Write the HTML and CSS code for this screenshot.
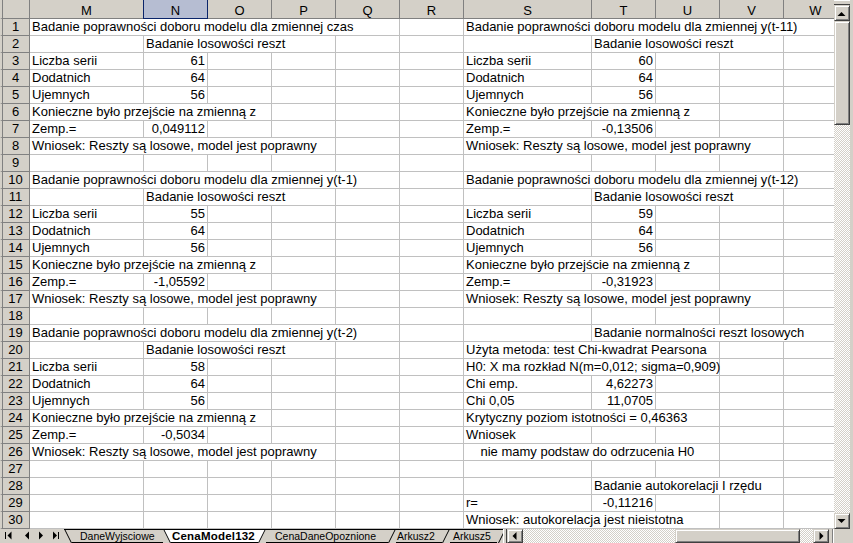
FILE: index.html
```html
<!DOCTYPE html>
<html lang="pl">
<head>
<meta charset="utf-8">
<title>CenaModel132</title>
<link rel="stylesheet" href="styles.css">
</head>
<body>
<div class="window">
  <div class="main">
    <div class="sheet">
      <div class="corner-cell"></div><div class="ch">M</div><div class="ch sel">N</div><div class="ch">O</div><div class="ch">P</div><div class="ch">Q</div><div class="ch">R</div><div class="ch">S</div><div class="ch">T</div><div class="ch">U</div><div class="ch">V</div><div class="ch">W</div>

      <div class="rh">1</div><div class="c sp5">Badanie poprawności doboru modelu dla zmiennej czas</div><div class="c"></div><div class="c sp5">Badanie poprawności doboru modelu dla zmiennej y(t-11)</div>

      <div class="rh">2</div><div class="c"></div><div class="c sp3">Badanie losowości reszt</div><div class="c"></div><div class="c"></div><div class="c"></div><div class="c sp3">Badanie losowości reszt</div><div class="c"></div>

      <div class="rh">3</div><div class="c">Liczba serii</div><div class="c n">61</div><div class="c"></div><div class="c"></div><div class="c"></div><div class="c"></div><div class="c">Liczba serii</div><div class="c n">60</div><div class="c"></div><div class="c"></div><div class="c"></div>

      <div class="rh">4</div><div class="c">Dodatnich</div><div class="c n">64</div><div class="c"></div><div class="c"></div><div class="c"></div><div class="c"></div><div class="c">Dodatnich</div><div class="c n">64</div><div class="c"></div><div class="c"></div><div class="c"></div>

      <div class="rh">5</div><div class="c">Ujemnych</div><div class="c n">56</div><div class="c"></div><div class="c"></div><div class="c"></div><div class="c"></div><div class="c">Ujemnych</div><div class="c n">56</div><div class="c"></div><div class="c"></div><div class="c"></div>

      <div class="rh">6</div><div class="c sp3">Konieczne było przejście na zmienną z</div><div class="c"></div><div class="c"></div><div class="c"></div><div class="c sp3">Konieczne było przejście na zmienną z</div><div class="c"></div><div class="c"></div>

      <div class="rh">7</div><div class="c">Zemp.=</div><div class="c n">0,049112</div><div class="c"></div><div class="c"></div><div class="c"></div><div class="c"></div><div class="c">Zemp.=</div><div class="c n">-0,13506</div><div class="c"></div><div class="c"></div><div class="c"></div>

      <div class="rh">8</div><div class="c sp4">Wniosek: Reszty są losowe, model jest poprawny</div><div class="c"></div><div class="c"></div><div class="c sp4">Wniosek: Reszty są losowe, model jest poprawny</div><div class="c"></div>

      <div class="rh">9</div><div class="c"></div><div class="c"></div><div class="c"></div><div class="c"></div><div class="c"></div><div class="c"></div><div class="c"></div><div class="c"></div><div class="c"></div><div class="c"></div><div class="c"></div>

      <div class="rh">10</div><div class="c sp5">Badanie poprawności doboru modelu dla zmiennej y(t-1)</div><div class="c"></div><div class="c sp5">Badanie poprawności doboru modelu dla zmiennej y(t-12)</div>

      <div class="rh">11</div><div class="c"></div><div class="c sp3">Badanie losowości reszt</div><div class="c"></div><div class="c"></div><div class="c"></div><div class="c sp3">Badanie losowości reszt</div><div class="c"></div>

      <div class="rh">12</div><div class="c">Liczba serii</div><div class="c n">55</div><div class="c"></div><div class="c"></div><div class="c"></div><div class="c"></div><div class="c">Liczba serii</div><div class="c n">59</div><div class="c"></div><div class="c"></div><div class="c"></div>

      <div class="rh">13</div><div class="c">Dodatnich</div><div class="c n">64</div><div class="c"></div><div class="c"></div><div class="c"></div><div class="c"></div><div class="c">Dodatnich</div><div class="c n">64</div><div class="c"></div><div class="c"></div><div class="c"></div>

      <div class="rh">14</div><div class="c">Ujemnych</div><div class="c n">56</div><div class="c"></div><div class="c"></div><div class="c"></div><div class="c"></div><div class="c">Ujemnych</div><div class="c n">56</div><div class="c"></div><div class="c"></div><div class="c"></div>

      <div class="rh">15</div><div class="c sp3">Konieczne było przejście na zmienną z</div><div class="c"></div><div class="c"></div><div class="c"></div><div class="c sp3">Konieczne było przejście na zmienną z</div><div class="c"></div><div class="c"></div>

      <div class="rh">16</div><div class="c">Zemp.=</div><div class="c n">-1,05592</div><div class="c"></div><div class="c"></div><div class="c"></div><div class="c"></div><div class="c">Zemp.=</div><div class="c n">-0,31923</div><div class="c"></div><div class="c"></div><div class="c"></div>

      <div class="rh">17</div><div class="c sp4">Wniosek: Reszty są losowe, model jest poprawny</div><div class="c"></div><div class="c"></div><div class="c sp4">Wniosek: Reszty są losowe, model jest poprawny</div><div class="c"></div>

      <div class="rh">18</div><div class="c"></div><div class="c"></div><div class="c"></div><div class="c"></div><div class="c"></div><div class="c"></div><div class="c"></div><div class="c"></div><div class="c"></div><div class="c"></div><div class="c"></div>

      <div class="rh">19</div><div class="c sp5">Badanie poprawności doboru modelu dla zmiennej y(t-2)</div><div class="c"></div><div class="c"></div><div class="c sp4">Badanie normalności reszt losowych</div>

      <div class="rh">20</div><div class="c"></div><div class="c sp3">Badanie losowości reszt</div><div class="c"></div><div class="c"></div><div class="c sp3">Użyta metoda: test Chi-kwadrat Pearsona</div><div class="c"></div><div class="c"></div>

      <div class="rh">21</div><div class="c">Liczba serii</div><div class="c n">58</div><div class="c"></div><div class="c"></div><div class="c"></div><div class="c"></div><div class="c sp3">H0: X ma rozkład N(m=0,012; sigma=0,909)</div><div class="c"></div><div class="c"></div>

      <div class="rh">22</div><div class="c">Dodatnich</div><div class="c n">64</div><div class="c"></div><div class="c"></div><div class="c"></div><div class="c"></div><div class="c">Chi emp.</div><div class="c n">4,62273</div><div class="c"></div><div class="c"></div><div class="c"></div>

      <div class="rh">23</div><div class="c">Ujemnych</div><div class="c n">56</div><div class="c"></div><div class="c"></div><div class="c"></div><div class="c"></div><div class="c">Chi 0,05</div><div class="c n">11,0705</div><div class="c"></div><div class="c"></div><div class="c"></div>

      <div class="rh">24</div><div class="c sp3">Konieczne było przejście na zmienną z</div><div class="c"></div><div class="c"></div><div class="c"></div><div class="c sp3">Krytyczny poziom istotności = 0,46363</div><div class="c"></div><div class="c"></div>

      <div class="rh">25</div><div class="c">Zemp.=</div><div class="c n">-0,5034</div><div class="c"></div><div class="c"></div><div class="c"></div><div class="c"></div><div class="c">Wniosek</div><div class="c"></div><div class="c"></div><div class="c"></div><div class="c"></div>

      <div class="rh">26</div><div class="c sp4">Wniosek: Reszty są losowe, model jest poprawny</div><div class="c"></div><div class="c"></div><div class="c sp3 pre">    nie mamy podstaw do odrzucenia H0</div><div class="c"></div><div class="c"></div>

      <div class="rh">27</div><div class="c"></div><div class="c"></div><div class="c"></div><div class="c"></div><div class="c"></div><div class="c"></div><div class="c"></div><div class="c"></div><div class="c"></div><div class="c"></div><div class="c"></div>

      <div class="rh">28</div><div class="c"></div><div class="c"></div><div class="c"></div><div class="c"></div><div class="c"></div><div class="c"></div><div class="c"></div><div class="c sp3">Badanie autokorelacji I rzędu</div><div class="c"></div>

      <div class="rh">29</div><div class="c"></div><div class="c"></div><div class="c"></div><div class="c"></div><div class="c"></div><div class="c"></div><div class="c">r=</div><div class="c n">-0,11216</div><div class="c"></div><div class="c"></div><div class="c"></div>

      <div class="rh">30</div><div class="c"></div><div class="c"></div><div class="c"></div><div class="c"></div><div class="c"></div><div class="c"></div><div class="c sp3">Wniosek: autokorelacja jest nieistotna</div><div class="c"></div><div class="c"></div>
    </div>

    <div class="vscroll">
      <div class="vsplit"></div>
      <div class="btn">
        <svg width="16" height="16" viewBox="0 0 16 16"><polygon points="3.5,11 11.5,11 7.5,7" fill="#000"/></svg>
      </div>
      <div class="vthumb"></div>
      <div class="vtrack"></div>
      <div class="btn">
        <svg width="16" height="16" viewBox="0 0 16 16"><polygon points="3.5,6 11.5,6 7.5,10" fill="#000"/></svg>
      </div>
    </div>
  </div>

  <div class="bottom">
    <div class="nav">
      <svg width="64" height="14" viewBox="0 0 64 14">
        <rect x="5" y="3" width="1" height="7" fill="#000"/>
        <polygon points="11.5,2.5 7.5,6.5 11.5,10.5" fill="#000"/>
        <polygon points="29,2.5 25,6.5 29,10.5" fill="#000"/>
        <polygon points="39,2.5 43,6.5 39,10.5" fill="#000"/>
        <polygon points="53,2.5 57,6.5 53,10.5" fill="#000"/>
        <rect x="58" y="3" width="1" height="7" fill="#000"/>
      </svg>
    </div>
    <div class="tabs">
      <svg class="slant" width="8" height="14" viewBox="0 0 8 14"><line x1="0.5" y1="0" x2="7.5" y2="14" stroke="#000"/></svg>
      <span class="tab t1">DaneWyjsciowe</span>
      <svg class="slant" width="8" height="14" viewBox="0 0 8 14"><polygon points="0,0 8,0 8,14 7,14" fill="#fff"/><line x1="0.5" y1="0" x2="7.5" y2="14" stroke="#000"/></svg>
      <span class="tab active">CenaModel132</span>
      <svg class="slant" width="8" height="14" viewBox="0 0 8 14"><polygon points="0,0 8,0 1,14 0,14" fill="#fff"/><line x1="7.5" y1="0" x2="0.5" y2="14" stroke="#000"/></svg>
      <span class="tab t3">CenaDaneOpoznione</span>
      <svg class="slant" width="8" height="14" viewBox="0 0 8 14"><line x1="7.5" y1="0" x2="0.5" y2="14" stroke="#000"/></svg>
      <span class="tab t4">Arkusz2</span>
      <svg class="slant" width="8" height="14" viewBox="0 0 8 14"><line x1="7.5" y1="0" x2="0.5" y2="14" stroke="#000"/></svg>
      <span class="tab t5">Arkusz5</span>
      <svg class="slant last" width="6" height="14" viewBox="0 0 6 14"><line x1="8.5" y1="0" x2="1.5" y2="14" stroke="#000"/></svg>
    </div>
    <div class="hsplit"></div>
    <div class="hscroll">
      <div class="btn hbtn">
        <svg width="16" height="14" viewBox="0 0 16 14"><polygon points="9.5,3 5.5,7 9.5,11" fill="#000"/></svg>
      </div>
      <div class="htrack left"></div>
      <div class="hthumb"></div>
      <div class="htrack right"></div>
      <div class="btn hbtn">
        <svg width="16" height="14" viewBox="0 0 16 14"><polygon points="6.5,3 10.5,7 6.5,11" fill="#000"/></svg>
      </div>
    </div>
    <div class="corner"></div>
  </div>
</div>
</body>
</html>
```

FILE: styles.css
```css
* {
  box-sizing: border-box;
}

html,
body {
  margin: 0;
  padding: 0;
  background: #d4d0c8;
}

body {
  font-family: "Liberation Sans", Arial, sans-serif;
  font-size: 13px;
  color: #000;
}

.window {
  width: 853px;
  height: 543px;
  overflow: hidden;
  display: flex;
  flex-direction: column;
  background: #d4d0c8;
}

.main {
  display: flex;
  height: 529px;
}

/* ---------- sheet grid ---------- */
.sheet {
  width: 834px;
  height: 529px;
  overflow: hidden;
  flex: none;
  display: grid;
  grid-template-columns: 30px 114px 64px 64px 64px 64px 64px 128px 64px 64px 64px 64px;
  grid-template-rows: 19px repeat(30, 17px);
  background: #fff;
}

.corner-cell {
  background: #d4d0c8;
  border-left: 2px solid #d4d0c8;
  border-right: 1px solid #808080;
  border-bottom: 1px solid #808080;
  box-shadow: inset 1px 0 0 #808080;
}

.ch {
  background: #d4d0c8;
  border-right: 1px solid #808080;
  border-bottom: 1px solid #808080;
  text-align: center;
  line-height: 17px;
  padding-top: 2px;
}

.ch.sel {
  background: #b6bdd2;
  border-right-color: #0a246a;
  border-bottom-color: #0a246a;
  box-shadow: -1px 0 0 #0a246a;
}

.rh {
  background: #d4d0c8;
  border-left: 2px solid #d4d0c8;
  border-right: 1px solid #808080;
  border-bottom: 1px solid #808080;
  box-shadow: inset 1px 0 0 #808080;
  text-align: center;
  line-height: 16px;
}

.c {
  border-right: 1px solid #c0c0c0;
  border-bottom: 1px solid #c0c0c0;
  padding: 0 2px 0 2px;
  line-height: 16px;
  white-space: nowrap;
  overflow: visible;
}

.n {
  text-align: right;
}

.pre {
  white-space: pre;
}

.sp3 { grid-column: span 3; }
.sp4 { grid-column: span 4; }
.sp5 { grid-column: span 5; }

/* ---------- 3D buttons ---------- */
.btn {
  flex: none;
  width: 16px;
  height: 16px;
  background: #d4d0c8;
  border: 1px solid;
  border-color: #d4d0c8 #404040 #404040 #d4d0c8;
  box-shadow: inset 1px 1px 0 #fff, inset -1px -1px 0 #808080;
  display: flex;
  align-items: center;
  justify-content: center;
}

.btn svg {
  flex: none;
  margin: -1px;
}

/* ---------- vertical scrollbar ---------- */
.vscroll {
  width: 19px;
  padding-right: 3px;
  display: flex;
  flex-direction: column;
  flex: none;
}

.vsplit {
  height: 5px;
  flex: none;
  border-top: 1px solid #fff;
  border-bottom: 1px solid #404040;
  background: #d4d0c8;
}

.vthumb {
  flex: none;
  height: 104px;
  background: #d4d0c8;
  border: 1px solid;
  border-color: #d4d0c8 #404040 #404040 #d4d0c8;
  box-shadow: inset 1px 1px 0 #fff, inset -1px -1px 0 #808080;
}

.vtrack {
  flex: 1;
  background: repeating-conic-gradient(#fff 0 25%, #d4d0c8 0 50%) 0 0 / 2px 2px;
}

/* ---------- bottom bar ---------- */
.bottom {
  display: flex;
  height: 14px;
  flex: none;
  background: #d4d0c8;
}

.nav {
  width: 64px;
  flex: none;
  display: flex;
  border-top: 0;
}

.nav svg {
  display: block;
}

.tabs {
  width: 439px;
  flex: none;
  display: flex;
  overflow: hidden;
  border-top: 1px solid #000;
}

.tabs .slant {
  flex: none;
  display: block;
  margin-top: -1px;
  height: 14px;
}

.tab {
  flex: none;
  height: 13px;
  font-size: 10.5px;
  line-height: 12px;
  white-space: nowrap;
  border-bottom: 1px solid #000;
}

.t1 { width: 91px; padding-left: 8px; }
.active {
  width: 87px;
  padding-left: 1px;
  background: #fff;
  font-weight: bold;
  font-size: 11.5px;
  letter-spacing: 0.2px;
  margin-top: -1px;
  height: 14px;
  padding-top: 1px;
}
.t3 { width: 122px; padding-left: 9px; }
.t4 { width: 46px; padding-left: 1px; }
.t5 { width: 47px; padding-left: 3px; }

.hsplit {
  width: 4px;
  flex: none;
  background: #d4d0c8;
  border-left: 1px solid #fff;
  border-right: 1px solid #404040;
}

.hscroll {
  width: 322px;
  flex: none;
  display: flex;
}

.hbtn {
  height: 14px;
}

.htrack {
  background: repeating-conic-gradient(#fff 0 25%, #d4d0c8 0 50%) 0 0 / 2px 2px;
}

.htrack.left {
  width: 152px;
  flex: none;
}

.hthumb {
  width: 125px;
  flex: none;
  background: #d4d0c8;
  border: 1px solid;
  border-color: #d4d0c8 #404040 #404040 #d4d0c8;
  box-shadow: inset 1px 1px 0 #fff, inset -1px -1px 0 #808080;
}

.htrack.right {
  flex: 1;
}

.corner {
  flex: 1;
  background: linear-gradient(to right, #d4d0c8 3px, #808080 3px 4px, #fff 4px 5px, #d4d0c8 5px);
}
```
